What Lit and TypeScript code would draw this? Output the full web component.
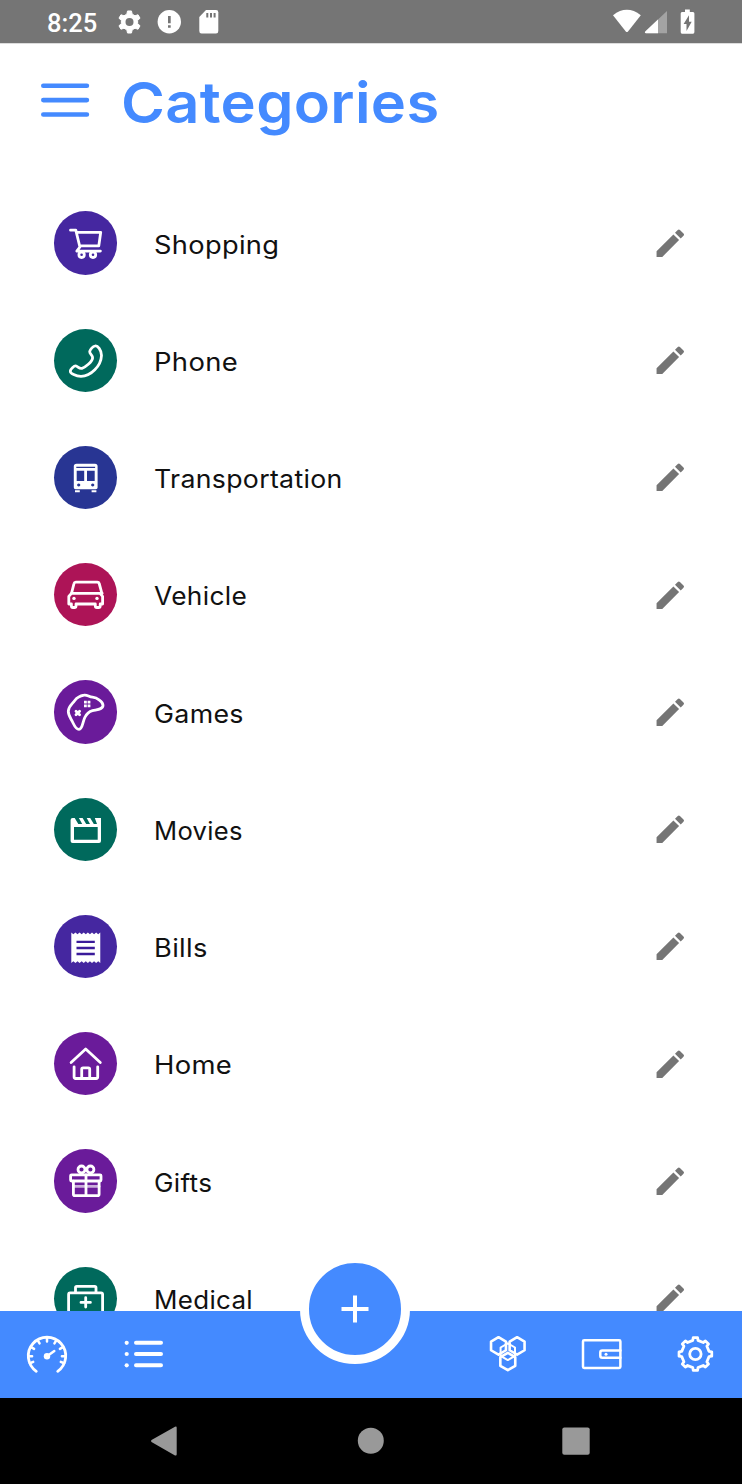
import { LitElement, html, svg, css } from "lit";
import { customElement, property } from "lit/decorators.js";
import { styleMap } from "lit/directives/style-map.js";

const gearPath = (cx: number, cy: number, rOut: number, rIn: number, teeth: number, top = 0.17, base = 0.31): string => {
  const pts: string[] = [];
  const step = (Math.PI * 2) / teeth;
  for (let i = 0; i < teeth; i++) {
    const a = i * step - Math.PI / 2;
    for (const [r, f] of [[rIn, -base], [rOut, -top], [rOut, top], [rIn, base]]) {
      pts.push(`${(cx + r * Math.cos(a + f * step)).toFixed(2)} ${(cy + r * Math.sin(a + f * step)).toFixed(2)}`);
    }
  }
  return `M${pts.join("L")}Z`;
};

const hexPath = (cx: number, cy: number, r: number): string => {
  const pts: string[] = [];
  for (let i = 0; i < 6; i++) {
    const a = (i * Math.PI) / 3 - Math.PI / 2;
    pts.push(`${(cx + r * 0.99 * Math.cos(a)).toFixed(2)} ${(cy + r * Math.sin(a)).toFixed(2)}`);
  }
  return `M${pts.join("L")}Z`;
};

const scallops = (): string => {
  let d = "M17.3 17.6";
  for (let i = 0; i < 7; i++) d += "l2.07 1.7l2.07 -1.7";
  d += "V47.9";
  for (let i = 0; i < 7; i++) d += "l-2.07 -1.7l-2.07 1.7";
  return d + "Z";
};

const icons: Record<string, unknown> = {
  cart: svg`<path d="M16.5 19.2H21.8L25.9 36L22.8 40.1H46.4M22.8 21.3H46.7L44.8 34.9H25.6"/><circle cx="27.6" cy="43.8" r="2.7"/><circle cx="39" cy="43.8" r="2.7"/>`,
  phone: svg`<path d="M41 17C43.5 16.2 47.5 21 47.5 26.5C47 37 37 47.3 27 47.3C22 47.3 16 44.5 16.3 42C16.5 40 20 36.8 21.7 36.9C23.7 37 25 40 28 39.3C31 38.5 38.3 33 38.6 28.8C38.8 26.3 35.4 25 35.7 22.5C36 20.5 39 17.4 41 17Z"/>`,
  bus: svg`<path class="solid" fill-rule="evenodd" d="M22.5 17.7H41Q43.6 17.7 43.6 20.2V41.5Q43.6 43.3 41.8 43.3H21.6Q19.8 43.3 19.8 41.5V20.2Q19.8 17.7 22.5 17.7ZM22.7 24.8V35H30.2V24.8ZM33 24.8V35H40.7V24.8ZM22.3 20.7V21.9H41.1V20.7ZM24.7 37.4a1.6 1.6 0 1 0 .01 0ZM38.7 37.4a1.6 1.6 0 1 0 .01 0Z"/><path class="solid" d="M21 44.2h4.8v2H21zM37.6 44.2h4.8v2h-4.8z"/>`,
  car: svg`<path d="M17.6 30L20 20.5Q20.3 19.1 21.8 19.1H43.3Q44.8 19.1 45.2 20.5L47.8 30M17.2 30.3H48.2M17.4 30.3L14.8 33.4V41H17.4V43Q17.4 44.5 18.9 44.5H20.4Q22 44.5 22 43V41H41.3V43Q41.3 44.5 42.9 44.5H44.6Q46.2 44.5 46.2 43V41H48.6V33.4L46 30.3"/><circle class="solid" cx="20" cy="35.4" r="1.7"/><circle class="solid" cx="43" cy="35.4" r="1.7"/>`,
  games: svg`<path d="M30 15.2C33 14.5 35 17 38.5 17.2C43 17.8 49 21.5 49 25.3C49 29.5 43 29.5 38.5 30.6C34 31.8 32.3 34.3 30.8 37.5C28.5 42.5 28.5 49.4 25 49.4C21.3 49.4 19.5 43.5 17.8 40.5C15.8 37 14.2 34.8 14.3 31.3C14.5 26 18 24.5 20.8 20.5C23 17.5 26 16 30 15.2Z"/><path class="solid" d="M30 20.8h2.8v2.8h-2.8zM33.6 20.8h2.8v2.8h-2.8zM30 24.4h2.8v2.8h-2.8zM33.6 24.4h2.8v2.8h-2.8z"/><path d="M22 31.2L25.6 34.8M25.6 31.2L22 34.8"/>`,
  movies: svg`<path class="solid" fill-rule="evenodd" d="M16.6 22Q16.6 20 18.6 20H20.7L24.3 26H28.2L24.9 20H28.6L32.2 26H36L32.7 20H36.2L39.8 26H43L40.8 20H47V43Q47 45 45 45H18.6Q16.6 45 16.6 43ZM20 29V41.7H43.7V29Z"/>`,
  bills: svg`<path class="solid" d="${scallops()}"/><path class="dark" d="M22.5 26.8H40.8M22.5 33H40.8M22.5 39H40.8"/>`,
  home: svg`<path d="M17.1 30.5L31.7 16.9L46.3 30.5M20.1 34.8V45.1Q20.1 46.5 21.6 46.5H42.2Q43.7 46.5 43.7 45.1V34.8M27.7 46.3V37.2Q27.7 35.8 29.1 35.8H34.3Q35.7 35.8 35.7 37.2V46.3"/>`,
  gifts: svg`<rect x="16.6" y="25.8" width="30.4" height="6.2" rx="1"/><path d="M19.4 32.2V45.3Q19.4 46.7 20.8 46.7H43.6Q45.1 46.7 45.1 45.3V32.2M32 25.8V46.7"/><path d="M19.4 37.4H45.1" opacity=".65"/><circle cx="27.5" cy="20.5" r="3.5"/><circle cx="36.4" cy="20.5" r="3.5"/>`,
  medical: svg`<rect x="14.6" y="25.9" width="34" height="24" rx="1.5"/><path d="M21.5 25.6V20.6Q21.5 19.4 22.8 19.4H40.7Q42 19.4 42 20.6V25.6M31.7 30.7V40.1M27 35.4H36.4"/>`,
};

interface Category {
  name: string;
  icon: string;
  color: string;
  stretch: number;
}

const categories: Category[] = [
  { name: "Shopping", icon: "cart", color: "#4527a0", stretch: 1.09 },
  { name: "Phone", icon: "phone", color: "#00695c", stretch: 1.098 },
  { name: "Transportation", icon: "bus", color: "#283593", stretch: 1.067 },
  { name: "Vehicle", icon: "car", color: "#ad1457", stretch: 1.053 },
  { name: "Games", icon: "games", color: "#6a1b9a", stretch: 1.071 },
  { name: "Movies", icon: "movies", color: "#00695c", stretch: 1.023 },
  { name: "Bills", icon: "bills", color: "#4527a0", stretch: 1.09 },
  { name: "Home", icon: "home", color: "#6a1b9a", stretch: 1.097 },
  { name: "Gifts", icon: "gifts", color: "#6a1b9a", stretch: 1.045 },
  { name: "Medical", icon: "medical", color: "#00695c", stretch: 1.038 },
];

@customElement("category-row")
class CategoryRow extends LitElement {
  @property({ attribute: false }) item!: Category;

  static styles = css`
    :host { display: flex; align-items: center; justify-content: space-between; height: 117.25px; padding: 0 54px 0 54px; box-sizing: border-box; }
    .label { display: flex; align-items: center; }
    .badge { width: 63.4px; height: 63.4px; border-radius: 50%; flex: none; }
    .glyph { display: block; fill: none; stroke: #fff; stroke-width: 2.8; stroke-linejoin: round; stroke-linecap: round; }
    .solid { fill: #fff; stroke: none; }
    .dark { stroke: #3a1a9a; stroke-width: 2.3; stroke-linecap: butt; }
    .name { margin-left: 36.2px; padding-top: 3px; font: 400 25px/24px Inter, sans-serif; letter-spacing: 0.3px; color: #111; white-space: nowrap; transform-origin: left center; }
    .pencil { display: block; flex: none; fill: #757575; }
  `;

  render() {
    const { name, icon, color, stretch } = this.item;
    return html`
      <div class="label">
        <div class="badge" style=${styleMap({ background: color })}>
          <svg class="glyph" width="63" height="63" viewBox="0 0 63 63">${icons[icon]}</svg>
        </div>
        <span class="name" style=${styleMap({ transform: `scaleX(${stretch})` })}>${name}</span>
      </div>
      <svg class="pencil" width="36.5" height="36.5" viewBox="0 0 24 24">
        <path d="M3 17.25V21h3.75L17.81 9.94l-3.75-3.75L3 17.25zM20.71 7.04a1 1 0 0 0 0-1.41l-2.34-2.34a1 1 0 0 0-1.41 0l-1.83 1.83 3.75 3.75 1.83-1.83z"/>
      </svg>`;
  }
}

@customElement("app-root")
class AppRoot extends LitElement {
  static styles = css`
    :host { display: flex; flex-direction: column; width: 742px; height: 1484px; overflow: hidden; background: #fff; font-family: Inter, sans-serif; }
    .status { height: 43px; flex: none; background: #757575; display: flex; align-items: center; justify-content: space-between; }
    .clock { margin-left: 47px; width: 70px; padding-top: 2px; font: 500 25.5px/30px Roboto, sans-serif; letter-spacing: 0; color: #fff; }
    .left { display: flex; align-items: center; }
    .block { display: block; }
    .header { height: 117px; flex: none; box-sizing: border-box; border-top: 1px solid #dcdcdc; display: flex; align-items: center; padding: 0 0 2px 41px; gap: 31.3px; }
    .title { margin: 3px 0 0; font: 600 57px/70px Inter, sans-serif; letter-spacing: 0.3px; color: #448aff; transform: scaleX(1.046); transform-origin: left center; }
    .list { flex: 1; min-height: 0; overflow: hidden; padding-top: 24.4px; }
    .tabs { height: 86.5px; flex: none; background: #448aff; display: flex; position: relative; }
    .tabicons { display: block; fill: none; stroke: #fff; stroke-width: 2.5; stroke-linejoin: round; stroke-linecap: round; }
    .fab { position: absolute; left: 300px; top: -57.5px; width: 110px; height: 110px; box-sizing: border-box; border: 9px solid #fff; border-radius: 50%; background: #448aff; display: flex; align-items: center; justify-content: center; }
    .plus { display: block; stroke: #fff; stroke-width: 4; }
    .solid { fill: #fff; stroke: none; }
    .system { height: 86.5px; flex: none; background: #000; }
  `;

  render() {
    const ticks = [-112, -90, -60, -30, 0, 30, 60, 90, 112].map((deg) => {
      const a = ((deg - 90) * Math.PI) / 180;
      const r = 18.5;
      const c = Math.cos(a);
      const s = Math.sin(a);
      return `M${47 + r * c} ${45.3 + r * s}L${47 + (r - 3.6) * c} ${45.3 + (r - 3.6) * s}`;
    }).join("");
    return html`
      <div class="status">
        <div class="left">
          <span class="clock">8:25</span>
          <svg class="block" width="104" height="43" viewBox="117 0 104 43" fill="#fff">
            <path d="${gearPath(129.5, 22, 11.2, 8.3, 6)}" stroke="#fff" stroke-width="1" stroke-linejoin="round"/>
            <circle cx="129.5" cy="22" r="4" fill="#757575"/>
            <circle cx="169.3" cy="21.8" r="11.7"/>
            <path d="M168 16h2.7v7.3H168zM168 25.3h2.7v2.5H168z" fill="#757575"/>
            <path d="M206 10H216Q218.3 10 218.3 12.3V31Q218.3 33.5 216 33.5H201.6Q199.3 33.5 199.3 31V17Z"/>
            <path d="M206.3 13h2v4.5h-2zM210 13h2v4.5h-2zM213.6 13h2v4.5h-2z" fill="#757575"/>
          </svg>
        </div>
        <svg class="block" width="132" height="43" viewBox="610 0 132 43">
          <path d="M613 15.2Q626.8 4.5 640.8 15.2L628 31.4Q626.9 32.7 625.8 31.4Z" fill="#fff"/>
          <path d="M667 11V33.3H646Q644 33 645.5 31.2Z" fill="#a3a3a3"/>
          <path d="M658 19.5V33.3H646Q644 33 645.5 31.2Z" fill="#fff"/>
          <path d="M685 9.5h4.8v2.5H693Q694.4 12 694.4 13.5V32Q694.4 33.7 693 33.7H682Q680.7 33.7 680.7 32V13.5Q680.7 12 682 12H685Z" fill="#fff"/>
          <path d="M689 15.3L683.6 24H686.5V31L691.7 21.7H689Z" fill="#757575"/>
        </svg>
      </div>
      <header class="header">
        <svg class="block" width="49" height="36" viewBox="0 0 49 36" stroke="#448aff" stroke-width="4.6" stroke-linecap="round">
          <path d="M2.3 2.8H45.9M2.3 17.1H45.9M2.3 31.5H45.9"/>
        </svg>
        <h1 class="title">Categories</h1>
      </header>
      <main class="list">${categories.map((item) => html`<category-row .item=${item}></category-row>`)}</main>
      <nav class="tabs">
        <svg class="tabicons" width="742" height="86" viewBox="0 0 742 86">
          <path d="M36.3 60.3A18.7 18.7 0 1 1 57.7 60.3" stroke-width="2.8"/>
          <path d="${ticks}" stroke-width="2.5"/>
          <path d="M47 45.3L54.3 40.1"/>
          <circle class="solid" cx="47" cy="45.3" r="3.2"/>
          <path d="M136 31.8H161M136 43H161M136 54.3H161" stroke-width="4"/>
          <circle class="solid" cx="126.7" cy="31.8" r="2.1"/><circle class="solid" cx="126.7" cy="43" r="2.1"/><circle class="solid" cx="126.7" cy="54.3" r="2.1"/>
          <path d="${hexPath(498.5, 34.9, 8.7)}${hexPath(517.1, 34.9, 8.7)}${hexPath(507.8, 50.5, 8.7)}" stroke-width="2.6"/>
          <path d="${hexPath(507.8, 40.7, 8.4)}" stroke-width="2"/>
          <rect x="583" y="29.2" width="37.4" height="27.8" rx="1.2"/>
          <path d="M620.4 39.5H602.3Q600.3 39.5 600.3 41.5V44.8Q600.3 46.8 602.3 46.8H620.4"/>
          <circle class="solid" cx="606" cy="43.2" r="1.5"/>
          <path d="${gearPath(695.4, 43, 16.5, 13.9, 8, 0.17, 0.24)}" stroke-width="2.8"/>
          <circle cx="695.4" cy="43" r="5.7" stroke-width="2.8"/>
        </svg>
        <div class="fab">
          <svg class="plus" width="28" height="28" viewBox="0 0 28 28"><path d="M14 .5V27.5M.5 14H27.5"/></svg>
        </div>
      </nav>
      <div class="system">
        <svg class="block" width="742" height="86" viewBox="0 0 742 86" fill="#999">
          <path d="M151.5 42Q150.5 43 151.5 44L175 57.4Q176.7 58 176.7 56.3V29.8Q176.7 27.8 175 28.8Z"/>
          <circle cx="370.8" cy="42.7" r="13"/>
          <rect x="562.3" y="29.5" width="27.4" height="27.2" rx="2"/>
        </svg>
      </div>`;
  }
}
